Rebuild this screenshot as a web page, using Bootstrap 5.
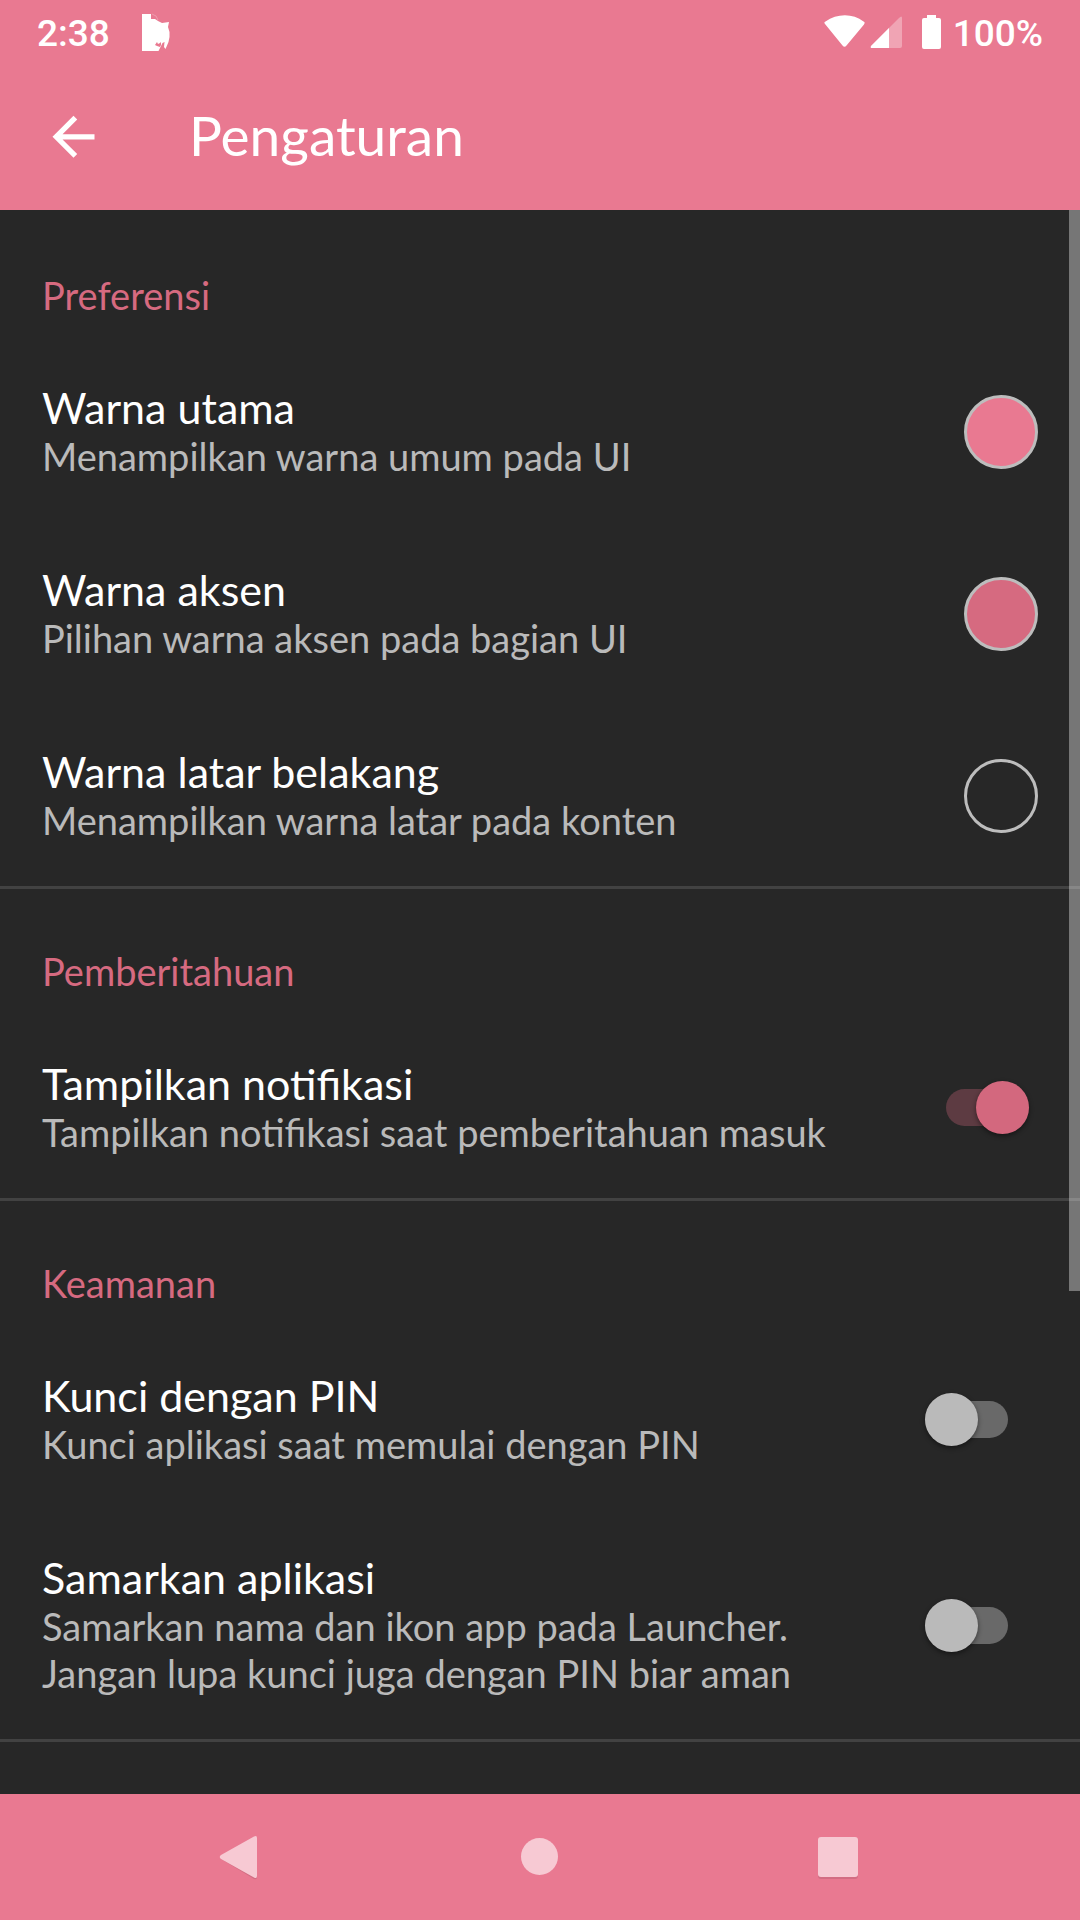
<!DOCTYPE html>
<html lang="id">
<head>
<meta charset="utf-8">
<meta name="viewport" content="width=device-width, initial-scale=1">
<title>Pengaturan</title>
<link href="https://cdn.jsdelivr.net/npm/bootstrap@5.3.0/dist/css/bootstrap.min.css" rel="stylesheet">
<style>
  :root { --primary-tone: #e97991; --accent-tone: #d66a80; --surface: #272727; }
  body { background: var(--surface); color: #fff; font-family: Lato, "Open Sans", sans-serif; }
  .app-head, .system-nav { background: var(--primary-tone); }
  .status-strip { height: 63px; padding: 0 37px; font: 500 37px/54px Roboto, sans-serif; }
  .status-text { padding-top: 4px; }
  .status-strip .notif { margin-left: 32px; }
  .status-strip .level { margin-left: 12px; }
  .toolbar { height: 147px; padding: 0 42px 3px; gap: 84px; }
  .toolbar h1 { font-size: 55px; line-height: 66px; font-weight: 400; }
  .section-name { padding: 59px 42px 21px; font-size: 38px; line-height: 47px; font-weight: 400; color: var(--accent-tone); }
  .setting { padding: 43px 42px 42px; }
  .setting-title { font-size: 43px; line-height: 50px; }
  .setting-note { font-size: 38px; line-height: 47px; color: #bababa; }
  .settings { border-top: 3px solid transparent; }
  .settings section { border-bottom: 3px solid #424242; }
  .swatch { width: 74px; height: 74px; border: 3px solid #bdbdbd; background: transparent; }
  .swatch-primary { background: var(--primary-tone); }
  .swatch-accent { background: var(--accent-tone); }
  .toggle { appearance: none; display: grid; align-items: center; width: 83px; height: 53px; margin: 0 30px 0 0; }
  .toggle:checked { margin-right: 9px; }
  .toggle::before, .toggle::after { content: ""; grid-area: 1 / 1; }
  .toggle::before { height: 37px; border-radius: 19px; background: #696969; }
  .toggle::after { width: 53px; height: 53px; border-radius: 50%; background: #bababa; box-shadow: 0 2px 5px rgba(0, 0, 0, .45); }
  .toggle:checked::before { background: #5d3b42; }
  .toggle:checked::after { justify-self: end; background: #d3687e; }
  .scroll-thumb { top: 210px; width: 11px; height: 1081px; background: rgba(255, 255, 255, .37); }
  .system-nav { height: 126px; }
  .nav-key { width: 300px; max-width: 33%; }
</style>
<script src="https://cdn.jsdelivr.net/npm/bootstrap@5.3.0/dist/js/bootstrap.bundle.min.js"></script>
</head>
<body>
<div class="d-flex flex-column vh-100 overflow-hidden">
  <header class="app-head flex-shrink-0">
    <div class="status-strip d-flex align-items-center">
      <span class="status-text">2:38</span>
      <svg class="notif" width="28" height="38" viewBox="0 0 28 38" fill="#fff" aria-hidden="true">
        <path d="M0 1h9v5h4l3 2 4 2 7-1-1 5 1.500 5v5l-1 5-3 7-1.500-2 .500-5-2 1-2 4-2 4H0z"/>
        <path d="M10 1l4 2 2 4" fill="none" stroke="#fff" opacity=".25"/>
        <path d="M15 29l1 2 2-1 1-1v3l-1 2-3-1-2-1z" fill="#e97991"/>
      </svg>
      <svg class="ms-auto" width="117" height="34" viewBox="0 0 117 34" fill="#fff" aria-hidden="true">
        <path d="M1 9Q-.5 7.500 1.500 6.500C13-2 29-2 39.500 6.500 41.500 7.500 40.500 8.500 40 9.500L22.500 30.500Q20.500 33 18.500 30.500z"/>
        <path d="M47 31L75 3q3-3 3 0v28q0 2-2 2H48q-2 0-1-2z" opacity=".32"/>
        <path d="M47 31L65 13v20H48q-2 0-1-2z"/>
        <path d="M103 0h9v3h3q2 0 2 2v27q0 2-2 2h-15q-2 0-2-2V5q0-2 2-2h3z"/>
      </svg>
      <span class="status-text level">100%</span>
    </div>
    <div class="toolbar d-flex align-items-center">
      <button type="button" class="btn p-0 border-0 d-flex" aria-label="Kembali">
        <svg width="63" height="63" viewBox="0 0 24 24" fill="#fff" aria-hidden="true"><path d="M20 11.500H7.830l5.590-5.590L12 4.500l-8 8 8 8 1.410-1.410L7.830 13.500H20v-2z"/></svg>
      </button>
      <h1 class="m-0">Pengaturan</h1>
    </div>
  </header>

  <main class="settings flex-fill overflow-hidden">
    <section>
      <h2 class="section-name m-0">Preferensi</h2>
      <div class="setting d-flex align-items-center justify-content-between">
        <div><div class="setting-title">Warna utama</div><div class="setting-note">Menampilkan warna umum pada UI</div></div>
        <button type="button" class="swatch swatch-primary rounded-circle flex-shrink-0" aria-label="Warna utama"></button>
      </div>
      <div class="setting d-flex align-items-center justify-content-between">
        <div><div class="setting-title">Warna aksen</div><div class="setting-note">Pilihan warna aksen pada bagian UI</div></div>
        <button type="button" class="swatch swatch-accent rounded-circle flex-shrink-0" aria-label="Warna aksen"></button>
      </div>
      <div class="setting d-flex align-items-center justify-content-between">
        <div><div class="setting-title">Warna latar belakang</div><div class="setting-note">Menampilkan warna latar pada konten</div></div>
        <button type="button" class="swatch rounded-circle flex-shrink-0" aria-label="Warna latar belakang"></button>
      </div>
    </section>
    <section>
      <h2 class="section-name m-0">Pemberitahuan</h2>
      <div class="setting d-flex align-items-center justify-content-between">
        <label for="notif"><span class="setting-title d-block">Tampilkan notifikasi</span><span class="setting-note d-block">Tampilkan notifikasi saat pemberitahuan masuk</span></label>
        <input class="toggle flex-shrink-0" type="checkbox" role="switch" id="notif" checked>
      </div>
    </section>
    <section>
      <h2 class="section-name m-0">Keamanan</h2>
      <div class="setting d-flex align-items-center justify-content-between">
        <label for="pin"><span class="setting-title d-block">Kunci dengan PIN</span><span class="setting-note d-block">Kunci aplikasi saat memulai dengan PIN</span></label>
        <input class="toggle flex-shrink-0" type="checkbox" role="switch" id="pin">
      </div>
      <div class="setting d-flex align-items-center justify-content-between">
        <label for="disguise"><span class="setting-title d-block">Samarkan aplikasi</span><span class="setting-note d-block">Samarkan nama dan ikon app pada Launcher.<br>Jangan lupa kunci juga dengan PIN biar aman</span></label>
        <input class="toggle flex-shrink-0" type="checkbox" role="switch" id="disguise">
      </div>
    </section>
  </main>

  <nav class="system-nav d-flex justify-content-center flex-shrink-0" aria-label="Navigasi sistem">
    <button type="button" class="nav-key btn p-0 border-0" aria-label="Kembali ke layar sebelumnya">
      <svg width="48" height="48" viewBox="0 0 48 48" aria-hidden="true"><path d="M5 26L38 46q3 1 3-2V28z" fill="#d26d83"/><path d="M5 22L38 3.500q3-1.500 3 1.500v38q0 3-3 1.500L5 26q-2.500-2 0-4z" fill="#f7c9d3"/></svg>
    </button>
    <button type="button" class="nav-key btn p-0 border-0" aria-label="Beranda">
      <svg width="48" height="48" viewBox="0 0 48 48" aria-hidden="true"><circle cx="23.500" cy="23.500" r="18.500" fill="#f7c9d3"/></svg>
    </button>
    <button type="button" class="nav-key btn p-0 border-0" aria-label="Aplikasi terkini">
      <svg width="48" height="48" viewBox="0 0 48 48" aria-hidden="true"><rect x="2" y="6" width="40" height="40" rx="3" fill="#d26d83"/><rect x="2" y="4" width="40" height="40" rx="3" fill="#f7c9d3"/></svg>
    </button>
  </nav>
</div>
<div class="scroll-thumb position-absolute end-0" aria-hidden="true"></div>
</body>
</html>
